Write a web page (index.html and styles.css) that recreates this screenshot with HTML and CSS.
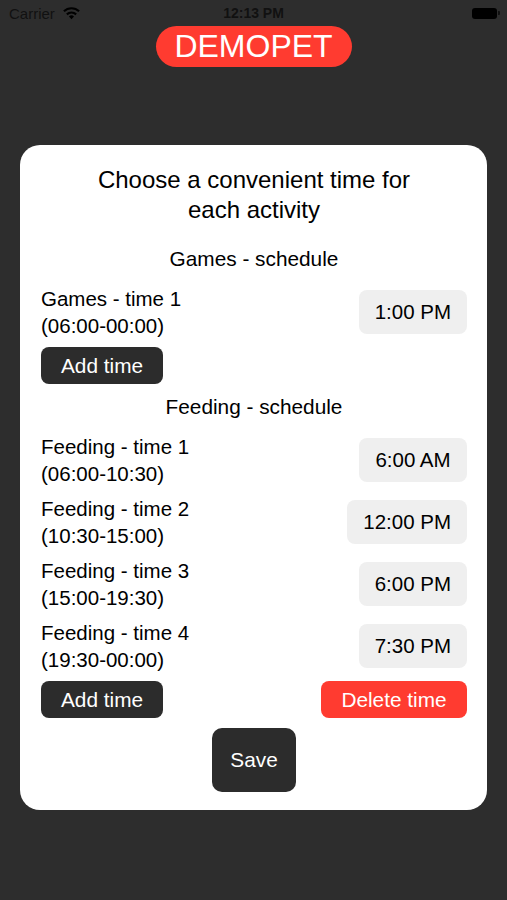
FILE: index.html
```html
<!DOCTYPE html>
<html lang="en">
<head>
    <meta charset="UTF-8">
    <title>DemoPet</title>
    <link rel="stylesheet" href="styles.css">
</head>
<body>
    <div class="status-bar">
        <div class="carrier">
            Carrier
            <svg class="wifi" width="19" height="14" viewBox="0 0 18 13">
                <path d="M9 12.5 L6.6 9.9 A3.4 3.4 0 0 1 11.4 9.9 Z" fill="#000"/>
                <path d="M4.6 7.8 A6.4 6.4 0 0 1 13.4 7.8" stroke="#000" stroke-width="2" fill="none"/>
                <path d="M1.8 4.9 A10.4 10.4 0 0 1 16.2 4.9" stroke="#000" stroke-width="2" fill="none"/>
            </svg>
        </div>
        <div class="clock">12:13 PM</div>
        <div class="battery"><span class="battery-level"></span><span class="battery-nub"></span></div>
    </div>

    <div class="brand-row">
        <div class="brand">DEMOPET</div>
    </div>

    <div class="card">
        <h1 class="card-title">Choose a convenient time for<br>each activity</h1>

        <div class="section">
            <div class="section-label">Games - schedule</div>
            <div class="slot">
                <div class="slot-name">Games - time 1<br>(06:00-00:00)</div>
                <button class="time-pill">1:00 PM</button>
            </div>
            <div class="actions">
                <button class="btn btn-dark">Add time</button>
            </div>
        </div>

        <div class="section">
            <div class="section-label">Feeding - schedule</div>
            <div class="slot">
                <div class="slot-name">Feeding - time 1<br>(06:00-10:30)</div>
                <button class="time-pill">6:00 AM</button>
            </div>
            <div class="slot">
                <div class="slot-name">Feeding - time 2<br>(10:30-15:00)</div>
                <button class="time-pill">12:00 PM</button>
            </div>
            <div class="slot">
                <div class="slot-name">Feeding - time 3<br>(15:00-19:30)</div>
                <button class="time-pill">6:00 PM</button>
            </div>
            <div class="slot">
                <div class="slot-name">Feeding - time 4<br>(19:30-00:00)</div>
                <button class="time-pill">7:30 PM</button>
            </div>
            <div class="actions">
                <button class="btn btn-dark">Add time</button>
                <button class="btn btn-red">Delete time</button>
            </div>
        </div>

        <div class="save-row">
            <button class="btn btn-dark btn-save">Save</button>
        </div>
    </div>
</body>
</html>
```

FILE: styles.css
```css
body {
    font-family: 'Liberation Sans', Arial, sans-serif;
    background: #2d2d2d;
    margin: 0;
    padding: 0;
    height: 100vh;
    color: #000;
}
.status-bar {
    height: 26px;
    display: flex;
    align-items: center;
    justify-content: space-between;
    padding: 0 7px 0 9px;
    position: relative;
}
.carrier {
    display: flex;
    align-items: center;
    gap: 7px;
    font-size: 15px;
    color: #111;
}
.clock {
    position: absolute;
    left: 0;
    right: 0;
    text-align: center;
    font-size: 14px;
    font-weight: bold;
    color: #111;
}
.battery {
    display: flex;
    align-items: center;
    gap: 1px;
}
.battery-level {
    width: 25px;
    height: 11px;
    background: #000;
    border-radius: 3px;
}
.battery-nub {
    width: 2px;
    height: 4px;
    background: #111;
    border-radius: 0 1px 1px 0;
}
.brand-row {
    display: flex;
    justify-content: center;
}
.brand {
    background: #ff3b30;
    color: #fff;
    font-size: 32px;
    line-height: 41px;
    height: 41px;
    width: 196px;
    text-align: center;
    border-radius: 21px;
}
.card {
    background: #fff;
    margin: 78px 20px 0;
    border-radius: 20px;
    padding: 20px 20px 18px 21px;
    display: flex;
    flex-direction: column;
}
.card-title {
    font-size: 24px;
    font-weight: normal;
    line-height: 30px;
    text-align: center;
    margin: 0 0 11px;
}
.section {
    display: flex;
    flex-direction: column;
    gap: 7px;
    margin-top: 9px;
}
.section-label {
    font-size: 20.8px;
    line-height: 28px;
    text-align: center;
    margin-bottom: 4px;
}
.slot {
    display: flex;
    align-items: center;
    justify-content: space-between;
    height: 55px;
}
.slot-name {
    font-size: 20.5px;
    line-height: 27px;
}
.time-pill {
    font-family: inherit;
    font-size: 20.5px;
    height: 44px;
    padding: 0 16px;
    min-width: 108px;
    border: none;
    border-radius: 8px;
    background: #efefef;
    color: #000;
}
.actions {
    display: flex;
    justify-content: space-between;
    margin-top: 1px;
}
.btn {
    font-family: inherit;
    font-size: 20.8px;
    height: 37px;
    border: none;
    border-radius: 8px;
    color: #fff;
    padding: 0 19px;
    min-width: 122px;
}
.btn-dark {
    background: #2c2c2c;
}
.btn-red {
    background: #ff3b30;
    min-width: 146px;
}
.save-row {
    display: flex;
    justify-content: center;
    margin-top: 10px;
}
.btn-save {
    width: 84px;
    min-width: 0;
    height: 64px;
    border-radius: 10px;
    padding: 0;
}
```
